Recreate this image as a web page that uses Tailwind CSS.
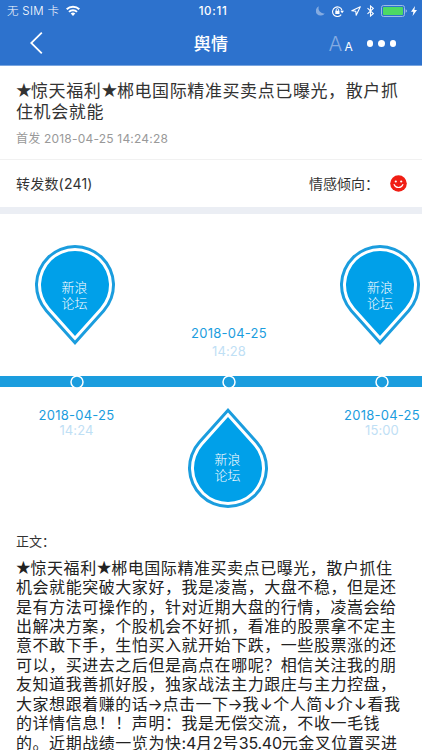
<!DOCTYPE html>
<html lang="zh-CN">
<head>
<meta charset="utf-8">
<title>舆情</title>
<script src="https://cdn.jsdelivr.net/npm/@tailwindcss/browser@4"></script>
</head>
<body class="bg-white">
<svg class="hidden">
  <symbol id="pin" viewBox="-41 -41 82 102">
    <path fill="#1b9dde" d="M-29.8 26.7A40 40 0 1 1 29.8 26.7L0 60Z"/>
    <path fill="#fff" d="M-27.6 24.7A37 37 0 1 1 27.6 24.7L0 55.5Z"/>
    <path fill="#00a0e9" d="M-25.3 22.7A34 34 0 1 1 25.3 22.7L0 51Z"/>
  </symbol>
  <symbol id="node" viewBox="0 0 14 14"><circle cx="7" cy="7" r="6" fill="#1b9dde" stroke="#fff" stroke-width="1.5"/></symbol>
</svg>
<div class="w-[422px] h-[750px] overflow-hidden flex flex-col bg-white text-[#333] font-[Inter,'Noto_Sans_CJK_SC',sans-serif]">
  <header class="h-[66px] shrink-0 bg-[#2d72cd] border-b border-[#79a5df] text-white">
    <div class="h-[22px] flex items-center justify-between pl-[7px] pr-[5px] relative">
      <div class="flex items-center gap-[6px] text-[11.5px] leading-[22px] whitespace-nowrap">
        <span class="w-[53px] font-light tracking-[.3px]">无 SIM 卡</span>
        <svg class="w-[14px] h-[11px] -mt-[1px]" viewBox="0 0 14 11" fill="none" stroke="#fff" stroke-width="2"><path d="M.7 4.2a9 9 0 0 1 12.6 0M3 6.9a5.7 5.7 0 0 1 8 0"/><path fill="#fff" stroke="none" d="M4.7 8.5a3.3 3.3 0 0 1 4.6 0L7 10.9Z"/></svg>
      </div>
      <span class="absolute inset-x-0 top-[3px] text-center text-[11.5px] leading-[17px] font-medium tracking-[.7px] pl-[4px]">10:11</span>
      <div class="flex items-center">
        <svg class="w-[9px] h-[10px] mr-[7px]" viewBox="0 0 9 10"><path fill="#84abe1" d="M3 .3A4.8 4.8 0 1 0 8.8 7.2 5 5 0 0 1 3 .3Z"/></svg>
        <svg class="w-[12px] h-[11px] mr-[7px]" viewBox="0 0 12 11" fill="none" stroke="#fff"><path d="M9.2 8.6A4.8 4.8 0 1 1 10 4.4" stroke-width="1.1"/><path fill="#fff" stroke="none" d="M8.2 4.8h3.8L10.1 7.2ZM3.3 4.8h4.2v3.3H3.3z"/><path d="M4.2 5V3.8a1.2 1.2 0 0 1 2.4 0V5" stroke-width=".9"/></svg>
        <svg class="w-[10px] h-[10px] mr-[6px]" viewBox="0 0 10 10" fill="none" stroke="#fff" stroke-width="1.1" stroke-linejoin="round"><path d="M9.3.8.8 4.8l4 .5.4 4Z"/></svg>
        <svg class="w-[7px] h-[12px] mr-[7px]" viewBox="0 0 7 12" fill="none" stroke="#fff" stroke-width="1.1"><path d="M.5 3.2 6.3 8.7 3.5 11V1l2.8 2.3L.5 8.8"/></svg>
        <svg class="w-[26px] h-[12px] mr-[4px]" viewBox="0 0 26 12"><rect x=".5" y=".5" width="23" height="11" rx="2" fill="none" stroke="#9bbbe7"/><rect x="2" y="2" width="20" height="8" rx=".8" fill="#4cd964"/><path fill="#9bbbe7" d="M24.6 4.2q1.4.5 1.4 1.8t-1.4 1.8z"/></svg>
        <svg class="w-[6px] h-[10px]" viewBox="0 0 6 10"><path fill="#fff" d="M4 0 0 5.8h2.4L1.6 10 6 4H3.4Z"/></svg>
      </div>
    </div>
    <div class="h-[43px] flex items-center relative">
      <svg class="w-[13px] h-[22px] ml-[30px] -mt-[1px]" viewBox="0 0 13 22" fill="none" stroke="#fff" stroke-width="1.8"><path d="M11.8.7 1.2 11l10.6 10.3"/></svg>
      <h1 class="absolute left-0 right-0 text-center text-[17px] font-medium leading-[42px] -mt-[1px] tracking-[.3px] font-['Noto_Sans_CJK_SC',sans-serif]">舆情</h1>
      <div class="ml-auto flex items-baseline font-[Inter,sans-serif] font-light leading-[22px] pt-[3px]">
        <span class="text-[20.5px] w-[16px] text-[#84abe1]">A</span><span class="text-[12px] font-normal">A</span>
      </div>
      <div class="flex gap-[5px] ml-[14px] mr-[26px]">
        <i class="size-[6.4px] rounded-full bg-white"></i><i class="size-[6.4px] rounded-full bg-white"></i><i class="size-[6.4px] rounded-full bg-white"></i>
      </div>
    </div>
  </header>

  <section class="h-[94px] shrink-0 border-b border-[#f1f1f1] pl-[16px] pt-[15px] whitespace-nowrap">
    <h2 class="text-[17px] leading-[20.7px] tracking-[.6px]"><span class="inline-block w-[15px] tracking-normal -indent-[1px]">★</span>惊天福利<span class="inline-block w-[15.5px] tracking-normal -indent-[1px]">★</span>郴电国际精准买卖点已曝光，散户抓<br>住机会就能</h2>
    <p class="text-[12px] leading-[18px] mt-[8px] text-[#999] tracking-[.2px]">首发 2018-04-25 14:24:28</p>
  </section>

  <section class="h-[47px] shrink-0 flex items-center justify-between pl-[16px] pr-[15px] text-[14px]">
    <span class="tracking-[.2px] -mt-[1px]">转发数(241)</span>
    <span class="flex items-center"><span class="w-[81px] whitespace-nowrap -mt-[1px]">情感倾向：</span>
      <svg class="size-[17px]" viewBox="0 0 17 17"><circle cx="8.5" cy="8.5" r="8.3" fill="#f01e14"/><circle cx="5.8" cy="6.5" r="1.1" fill="#fff"/><circle cx="11.2" cy="6.5" r="1.1" fill="#fff"/><path d="M4.1 9.5a4.7 4.7 0 0 0 8.8 0" fill="none" stroke="#fff" stroke-width="1.1" stroke-linecap="round"/></svg>
    </span>
  </section>
  <div class="h-[7px] shrink-0 bg-[#ebeef4]"></div>

  <section class="h-[306px] shrink-0 grid grid-cols-[153px_153px_153px] text-center text-[#1b9dde]">
    <div class="flex flex-col items-center">
      <div class="h-[162px] w-full pt-[30px] flex justify-center">
        <div class="relative w-[82px] h-[102px] -ml-[4px]"><svg class="w-full h-full"><use href="#pin"/></svg><p class="absolute inset-x-0 top-[36px] text-[13px] leading-[15.5px] text-white font-light">新浪<br>论坛</p></div>
      </div>
      <div class="h-[11px] w-full bg-[#1b9dde] flex items-center justify-center"><svg class="size-[14px] shrink-0"><use href="#node"/></svg></div>
      <p class="mt-[20px] text-[13px] leading-[16px] tracking-[.25px]">2018-04-25</p>
      <p class="text-[13px] leading-[15px] text-[#bfe0f5] tracking-[.1px]">14:24</p>
    </div>
    <div class="flex flex-col items-center">
      <div class="h-[162px] w-full pt-[110px] pr-[1px]">
        <p class="text-[13px] leading-[18px] tracking-[.25px]">2018-04-25</p>
        <p class="text-[13px] leading-[18px] text-[#bfe0f5] tracking-[.1px]">14:28</p>
      </div>
      <div class="h-[11px] w-full bg-[#1b9dde] flex items-center justify-center"><svg class="size-[14px] shrink-0 -ml-[1px]"><use href="#node"/></svg></div>
      <div class="relative w-[82px] h-[102px] mt-[20px] -ml-[4px]"><svg class="w-full h-full rotate-180"><use href="#pin"/></svg><p class="absolute inset-x-0 top-[45px] text-[13px] leading-[15.5px] text-white font-light">新浪<br>论坛</p></div>
    </div>
    <div class="flex flex-col items-center">
      <div class="h-[162px] w-full pt-[30px] flex justify-center">
        <div class="relative w-[82px] h-[102px] -ml-[5px]"><svg class="w-full h-full"><use href="#pin"/></svg><p class="absolute inset-x-0 top-[36px] text-[13px] leading-[15.5px] text-white font-light">新浪<br>论坛</p></div>
      </div>
      <div class="h-[11px] w-full bg-[#1b9dde] flex items-center justify-center"><svg class="size-[14px] shrink-0 -ml-[1px]"><use href="#node"/></svg></div>
      <p class="mt-[20px] text-[13px] leading-[16px] tracking-[.25px] pr-[1px]">2018-04-25</p>
      <p class="text-[13px] leading-[15px] text-[#bfe0f5] tracking-[.1px] pr-[1px]">15:00</p>
    </div>
  </section>

  <section class="pl-[16px] pt-[12px] whitespace-nowrap">
    <h3 class="text-[13px] leading-[18px]">正文：</h3>
    <div class="mt-[8.6px] text-[16px] leading-[19.45px] tracking-[.55px] text-[#222]">
      <p><span class="inline-block w-[14.5px] tracking-normal -indent-[1px]">★</span>惊天福利<span class="inline-block w-[14.5px] tracking-normal -indent-[1px]">★</span>郴电国际精准买卖点已曝光，散户抓住</p>
      <p>机会就能突破大家好，我是凌嵩，大盘不稳，但是还</p>
      <p>是有方法可操作的，针对近期大盘的行情，凌嵩会给</p>
      <p>出解决方案，个股机会不好抓，看准的股票拿不定主</p>
      <p>意不敢下手，生怕买入就开始下跌，一些股票涨的还</p>
      <p>可以，买进去之后但是高点在哪呢？相信关注我的朋</p>
      <p>友知道我善抓好股，独家战法主力跟庄与主力控盘，</p>
      <p>大家想跟着赚的话<span class="inline-block w-[14px] tracking-normal -indent-[1px]">→</span>点击一下<span class="inline-block w-[14px] tracking-normal -indent-[1px]">→</span>我<span class="inline-block w-[14px] tracking-normal text-center">↓</span>个人简<span class="inline-block w-[14px] tracking-normal text-center">↓</span>介<span class="inline-block w-[14px] tracking-normal text-center">↓</span>看我</p>
      <p>的详情信息！！声明：我是无偿交流，不收一毛钱</p>
      <p>的。近期战绩一览为快<span class="tracking-[-.2px]">:4</span>月<span class="tracking-[-.2px]">2</span>号<span class="tracking-[-.25px]">35.40</span>元金叉位置买进</p>
    </div>
  </section>
</div>
</body>
</html>
